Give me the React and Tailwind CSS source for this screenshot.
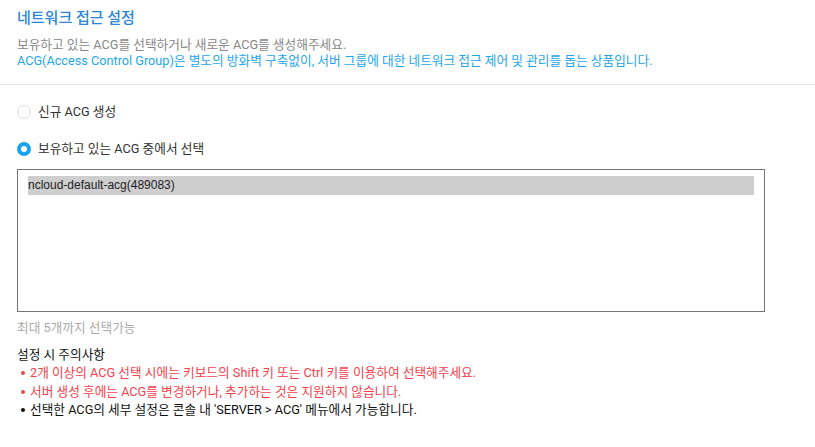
import { useState } from 'react';

const acgList = [{ id: '489083', name: 'ncloud-default-acg' }];

const notices = [
  { text: '2개 이상의 ACG 선택 시에는 키보드의 Shift 키 또는 Ctrl 키를 이용하여 선택해주세요.', red: true },
  { text: '서버 생성 후에는 ACG를 변경하거나, 추가하는 것은 지원하지 않습니다.', red: true },
  { text: "선택한 ACG의 세부 설정은 콘솔 내 'SERVER > ACG' 메뉴에서 가능합니다.", red: false },
];

function Radio({ checked, label, onClick }) {
  return (
    <label className="flex items-center gap-[7px] cursor-pointer" onClick={onClick}>
      {checked ? (
        <span className="w-[14px] h-[14px] rounded-full bg-[#1aa3ec] flex items-center justify-center">
          <span className="w-[6px] h-[6px] rounded-full bg-white" />
        </span>
      ) : (
        <span className="w-[14px] h-[14px] rounded-full border border-[#dcdcdc] bg-white" />
      )}
      <span className="text-[12.7px] text-[#333]">{label}</span>
    </label>
  );
}

function App() {
  const [mode, setMode] = useState('existing');

  return (
    <div className="min-h-screen bg-white font-['Roboto','Noto_Sans_CJK_KR',sans-serif]">
      {/* Header */}
      <div className="px-[17px] pt-[9px] pb-[15px] border-b border-[#e6e6e6]">
        <h1 className="text-[15px] font-medium text-[#2a86d6] leading-[18px]">네트워크 접근 설정</h1>
        <p className="mt-[10px] text-[12.7px] text-[#888] leading-[16px]">
          보유하고 있는 ACG를 선택하거나 새로운 ACG를 생성해주세요.
        </p>
        <p className="text-[12.7px] text-[#1ea6ec] leading-[16px]">
          ACG(Access Control Group)은 별도의 방화벽 구축없이, 서버 그룹에 대한 네트워크 접근 제어 및 관리를 돕는 상품입니다.
        </p>
      </div>

      {/* Options */}
      <div className="px-[17px] pt-[17px]">
        <Radio checked={mode === 'new'} label="신규 ACG 생성" onClick={() => setMode('new')} />
        <div className="mt-[18px]">
          <Radio checked={mode === 'existing'} label="보유하고 있는 ACG 중에서 선택" onClick={() => setMode('existing')} />
        </div>

        <div className="mt-[11px] w-[748px] h-[143px] border border-[#767676] px-[10px] py-[6px] font-['Liberation_Sans',sans-serif]">
          {acgList.map((acg) => (
            <div key={acg.id} className="h-[19px] bg-[#cecece] text-[12px] leading-[19px] text-[#222]">
              {acg.name}({acg.id})
            </div>
          ))}
        </div>

        <p className="mt-[8px] text-[12.7px] text-[#aaa] leading-[16px]">최대 5개까지 선택가능</p>

        <div className="mt-[10px]">
          <p className="text-[12.7px] text-[#111] leading-[18px]">설정 시 주의사항</p>
          <ul className="mt-[0px]">
            {notices.map((n) => (
              <li
                key={n.text}
                className={`flex items-center gap-[5px] pl-[4px] text-[12.7px] leading-[18.5px] ${n.red ? 'text-[#f5414c]' : 'text-[#111]'}`}
              >
                <span className="w-[4px] h-[4px] rounded-full bg-current" />
                {n.text}
              </li>
            ))}
          </ul>
        </div>
      </div>
    </div>
  );
}

export default App;
